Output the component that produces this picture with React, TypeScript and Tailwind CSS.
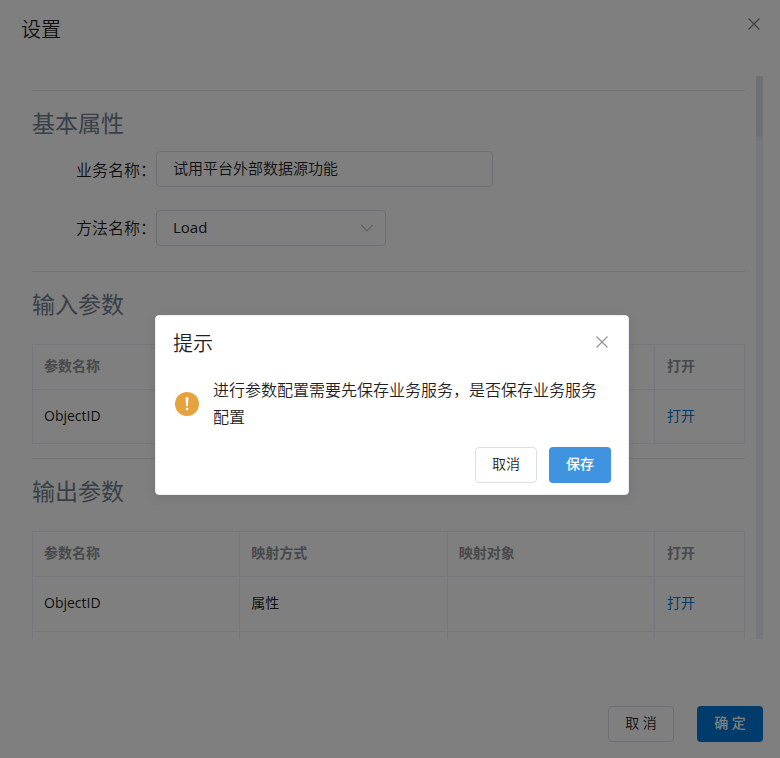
import { useState } from "react"

type Param = { name: string; mode?: string; target?: string }

const inputParams: Param[] = [{ name: "ObjectID" }]

const outputParams: Param[] = [
  { name: "ObjectID", mode: "属性" },
  { name: "" },
]

export default function App() {
  const [name, setName] = useState("试用平台外部数据源功能")
  const [confirming, setConfirming] = useState(true)

  return (
    <div className="relative flex h-screen flex-col bg-white pr-[17px] font-['Open_Sans','Noto_Sans_CJK_SC',sans-serif] font-[350] text-[#1f1f1f]">
      <header className="flex h-[76px] shrink-0 items-start justify-between pl-[21px]">
        <h1 className="pt-4 text-[20px] leading-7">设置</h1>
        <button aria-label="关闭" className="mt-[17px] mr-0.5 text-[#808080]">
          <CloseIcon />
        </button>
      </header>

      <main className="flex min-h-0 flex-1 pl-8">
        <div className="min-w-0 flex-1 overflow-hidden pt-[14px]">
          <Section title="基本属性">
            <div className="mt-[13px] mb-[25px] space-y-[23px]">
              <div className="flex items-center">
                <label htmlFor="service" className="w-[124px] pt-0.5 text-right text-[16px] leading-6">业务名称：</label>
                <input
                  id="service"
                  value={name}
                  onChange={(e) => setName(e.target.value)}
                  className="h-9 w-[337px] rounded border border-[#dcdfe6] bg-white px-4 pb-1 text-[15px] leading-6"
                />
              </div>
              <div className="flex items-center">
                <label htmlFor="method" className="w-[124px] text-right text-[16px] leading-6">方法名称：</label>
                <div className="relative w-[230px]">
                  <select id="method" className="h-9 w-full appearance-none rounded border border-[#dcdfe6] bg-white px-4 pb-0.5 text-[15px] leading-6 font-normal">
                    <option>Load</option>
                  </select>
                  <svg viewBox="0 0 14 8" className="pointer-events-none absolute top-[14px] right-3 h-2 w-3.5 fill-none stroke-[#c0c4cc]">
                    <path d="M1.3 1 7 6.8 12.7 1" strokeWidth="1.2" />
                  </svg>
                </div>
              </div>
            </div>
          </Section>

          <Section title="输入参数">
            <ParamTable rows={inputParams} rowClass="h-[54px]" />
          </Section>

          <Section title="输出参数">
            <ParamTable rows={outputParams} rowClass="h-[55px]" />
          </Section>
        </div>

        {/* scrollbar */}
        <div className="ml-[11px] w-[7px] shrink-0 bg-[#ebeef5]">
          <div className="h-[61px] rounded-full bg-[#d8dfe8]" />
        </div>
      </main>

      <footer className="flex shrink-0 justify-end gap-[23px] pt-[67px] pb-4 text-[14px] leading-5">
        <button className="h-9 w-[66px] rounded border border-[#dcdfe6] bg-white pb-0.5">取 消</button>
        <button className="h-9 w-[66px] rounded bg-[#0078d7] pb-0.5 font-medium text-white">确 定</button>
      </footer>

      {confirming && (
        <div className="absolute inset-0 grid place-items-center bg-black/50 pt-[52px] pl-1">
          <div role="dialog" aria-labelledby="confirm-title" className="w-[474px] max-w-full rounded border border-[#ebeef5] bg-white px-[17px] pt-[14px] pb-[11px] shadow-[0_2px_12px_rgba(0,0,0,0.1)]">
            <div className="flex items-start justify-between">
              <h2 id="confirm-title" className="text-[20px] leading-7">提示</h2>
              <button aria-label="关闭" onClick={() => setConfirming(false)} className="mt-[5px] mr-0.5 text-[#909399]">
                <CloseIcon />
              </button>
            </div>
            <div className="mt-[19px] flex items-center gap-3.5 pl-0.5">
              <svg viewBox="0 0 24 24" className="size-6 shrink-0">
                <circle cx="12" cy="12" r="12" fill="#e6a23c" />
                <path d="M10.6 6.3a1.4 1.4 0 0 1 2.8 0l-.5 7.3a.9.9 0 0 1-1.8 0z" fill="#fff" />
                <circle cx="12" cy="17.1" r="1.3" fill="#fff" />
              </svg>
              <p className="text-[16px] leading-[27px]">进行参数配置需要先保存业务服务，是否保存业务服务配置</p>
            </div>
            <div className="mt-4 flex justify-end gap-3 text-[14px] leading-5">
              <button onClick={() => setConfirming(false)} className="h-9 w-[62px] rounded border border-[#dcdfe6] bg-white pb-0.5">取消</button>
              <button onClick={() => setConfirming(false)} className="h-9 w-[62px] rounded bg-[#4094df] pb-0.5 font-medium text-white">保存</button>
            </div>
          </div>
        </div>
      )}
    </div>
  )
}

function Section({ title, children }: { title: string; children: React.ReactNode }) {
  return (
    <section className="border-t border-[#e4e6ea] pt-[17px]">
      <h2 className="text-[23px] leading-[30px] font-normal text-[#708090]">{title}</h2>
      {children}
    </section>
  )
}

function ParamTable({ rows, rowClass }: { rows: Param[]; rowClass: string }) {
  return (
    <table className="mt-[25px] mb-3.5 w-full table-fixed border-separate border-spacing-0 border-t border-l border-[#ebeef5] text-left text-[14px] leading-5">
      <thead>
        <tr className="h-[45px] text-[#909399]">
          <Head>参数名称</Head>
          <Head>映射方式</Head>
          <Head>映射对象</Head>
          <th className="w-[90px] border-r border-b border-[#ebeef5] px-3 pb-0.5 font-bold">打开</th>
        </tr>
      </thead>
      <tbody>
        {rows.map((row, i) => (
          <tr key={i} className={rowClass}>
            <Cell>{row.name}</Cell>
            <Cell>{row.mode}</Cell>
            <Cell>{row.target}</Cell>
            <td className="border-r border-b border-[#ebeef5] px-3 pb-0.5">
              {row.name && <a href="#open" className="font-normal text-[#0078d7]">打开</a>}
            </td>
          </tr>
        ))}
      </tbody>
    </table>
  )
}

function Head({ children }: { children: React.ReactNode }) {
  return <th className="border-r border-b border-[#ebeef5] px-[11px] pb-0.5 font-bold">{children}</th>
}

function Cell({ children }: { children: React.ReactNode }) {
  return <td className="border-r border-b border-[#ebeef5] px-[11px] pb-0.5 font-normal">{children}</td>
}

function CloseIcon() {
  return (
    <svg viewBox="0 0 14 14" className="size-3.5 fill-none stroke-current">
      <path d="M1.5 1.5l11 11M12.5 1.5l-11 11" strokeWidth="1.2" />
    </svg>
  )
}
